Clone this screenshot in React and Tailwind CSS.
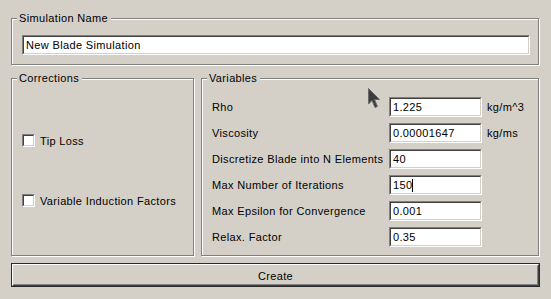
const font = { fontFamily: '"Liberation Sans", Arial, sans-serif' }

const Group = ({ title, className, children }) => (
  <div className={`relative border border-[#808080] shadow-[inset_1px_1px_0_#fff,1px_1px_0_#fff] ${className}`}>
    <span className="absolute left-[5px] top-[-8px] bg-[#d4d0c8] pl-[2px] pr-[3px] leading-[14px]">{title}</span>
    {children}
  </div>
)

const Field = ({ value, className, caret }) => (
  <div className={`border border-t-[#808080] border-l-[#808080] border-b-white border-r-white ${className}`}>
    <div className="h-full border border-t-[#404040] border-l-[#404040] border-b-[#d4d0c8] border-r-[#d4d0c8] bg-white flex items-center pl-[2px] leading-[14px]">
      <span>{value}</span>
      {caret && <span className="w-px h-[13px] bg-black" />}
    </div>
  </div>
)

const Check = ({ label }) => (
  <div className="flex items-center gap-[5px] h-[13px]">
    <div className="w-[13px] h-[13px] border border-t-[#808080] border-l-[#808080] border-b-white border-r-white">
      <div className="h-full border border-t-[#404040] border-l-[#404040] border-b-[#d4d0c8] border-r-[#d4d0c8] bg-white" />
    </div>
    <span className="leading-[14px]">{label}</span>
  </div>
)

const rows = [
  { label: 'Rho', value: '1.225', unit: 'kg/m^3' },
  { label: 'Viscosity', value: '0.00001647', unit: 'kg/ms' },
  { label: 'Discretize Blade into N Elements', value: '40' },
  { label: 'Max Number of Iterations', value: '150', caret: true },
  { label: 'Max Epsilon for Convergence', value: '0.001' },
  { label: 'Relax. Factor', value: '0.35' },
]

export default function App() {
  return (
    <div style={font} className="relative w-[551px] h-[299px] bg-[#d4d0c8] text-[11px] tracking-[0.35px] text-black pl-[11px] pt-[18px] flex flex-col overflow-hidden">
      <Group title="Simulation Name" className="w-[528px] h-[47px] pl-[10px] pt-[16px]">
        <Field value="New Blade Simulation" className="w-[508px] h-[20px]" />
      </Group>

      <div className="flex gap-[7px] mt-[13px] h-[178px]">
        <Group title="Corrections" className="w-[183px] h-full pl-[10px] pt-[55px] flex flex-col gap-[47px]">
          <Check label="Tip Loss" />
          <Check label="Variable Induction Factors" />
        </Group>

        <Group title="Variables" className="w-[338px] h-full pl-[10px] pt-[18px] flex flex-col gap-[6px]">
          {rows.map((r) => (
            <div key={r.label} className="flex items-center h-[20px]">
              <span className="w-[177px] leading-[14px]">{r.label}</span>
              <Field value={r.value} caret={r.caret} className="w-[93px] h-[20px]" />
              {r.unit && <span className="ml-[5px] leading-[14px]">{r.unit}</span>}
            </div>
          ))}
        </Group>
      </div>

      <div className="mt-[7px] w-[529px] h-[24px] border border-[#2a2a2a]">
        <div className="h-full border border-t-white border-l-white border-b-[#404040] border-r-[#404040]">
          <div className="h-full border border-t-[#d4d0c8] border-l-[#d4d0c8] border-b-[#808080] border-r-[#808080] flex items-center justify-center leading-[14px] pt-[2px]">
            Create
          </div>
        </div>
      </div>

      <svg className="absolute left-[368px] top-[88px]" width="14" height="21" viewBox="0 0 14 21">
        <polygon points="0.5,0.5 0.5,16 4,12.5 7,19.5 9.5,18.5 6.5,11.5 11.5,11.5" fill="#3c3c3c" stroke="#6a6a6a" strokeWidth="1" />
      </svg>
    </div>
  )
}
